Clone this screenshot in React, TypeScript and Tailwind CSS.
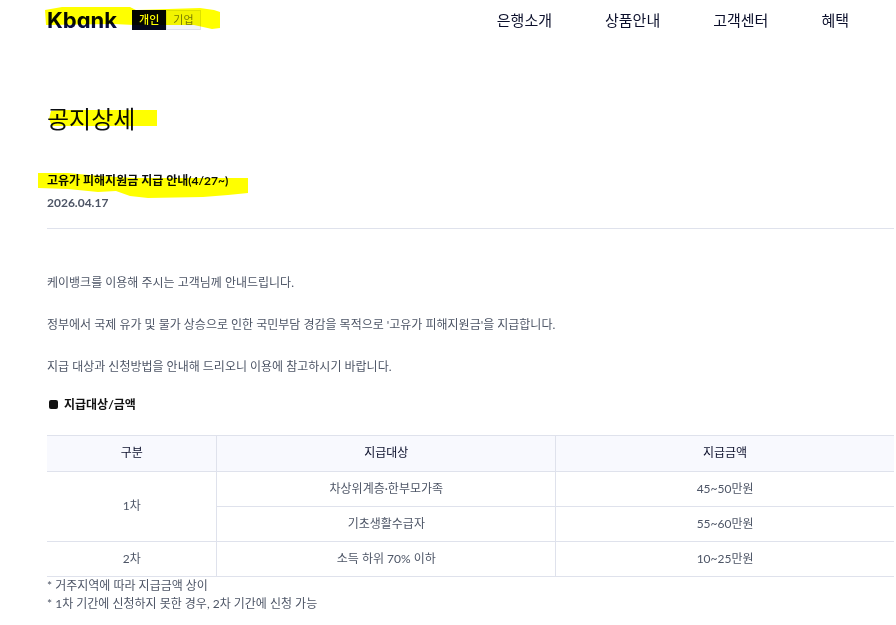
import React from "react";

const menus = ["은행소개", "상품안내", "고객센터", "혜택"];

const paragraphs = [
  "케이뱅크를 이용해 주시는 고객님께 안내드립니다.",
  "정부에서 국제 유가 및 물가 상승으로 인한 국민부담 경감을 목적으로 '고유가 피해지원금'을 지급합니다.",
  "지급 대상과 신청방법을 안내해 드리오니 이용에 참고하시기 바랍니다.",
];

// yellow marker stroke laid over the text
function Marker({ d, className, width, height }: { d: string; className: string; width: number; height: number }) {
  return (
    <svg
      className={"absolute pointer-events-none mix-blend-multiply " + className}
      width={width}
      height={height}
      viewBox={`0 0 ${width} ${height}`}
      aria-hidden="true"
    >
      <path d={d} fill="#ffff00" />
    </svg>
  );
}

function Header() {
  return (
    <header className="flex h-10 items-center justify-between pr-[47px] pl-[47px]">
      <div className="relative flex items-center gap-[15px]">
        <a
          href="#"
          className="font-['Inter',sans-serif] text-[22px] leading-6 font-bold text-[#070b3f] [font-feature-settings:'cv11']"
        >
          Kbank
        </a>
        <div className="flex text-[11px] leading-[18px]">
          <button className="border border-[#04061c] bg-[#04061c] px-[6px] font-medium text-white">개인</button>
          <button className="border border-[#dde0ea] bg-[#f3f4f6] px-[6px] text-[#777b85]">기업</button>
        </div>
        <Marker
          className="-top-px -left-[3px]"
          width={176}
          height={22}
          d="M1 3 L18 0 L86 0 L92 3 L156 1 L170 3 L176 5 V21 L168 22 L150 18 L90 18 L70 17 L2 18 Z"
        />
      </div>
      <nav className="flex gap-[53px] text-[15px] leading-5 text-[#0b0f2b]">
        {menus.map((m) => (
          <a key={m} href="#">{m}</a>
        ))}
      </nav>
    </header>
  );
}

function AmountTable() {
  const cell = "border-b border-[#dfe2ec]";
  const left = " border-l";
  return (
    <table className="mt-5 w-full table-fixed border-separate border-spacing-0 border-t border-[#dfe2ec] text-center">
      <colgroup>
        <col className="w-[20%]" />
        <col className="w-[40%]" />
        <col className="w-[40%]" />
      </colgroup>
      <thead className="bg-[#f8f9fe] text-[#0b0f2b]">
        <tr className="h-9">
          <th className={cell + " pb-0.5 font-normal"}>구분</th>
          <th className={cell + left + " pb-0.5 font-normal"}>지급대상</th>
          <th className={cell + left + " pb-0.5 font-normal"}>지급금액</th>
        </tr>
      </thead>
      <tbody>
        <tr className="h-[35px]">
          <td className={cell + " pb-0.5"} rowSpan={2}>1차</td>
          <td className={cell + left}>차상위계층·한부모가족</td>
          <td className={cell + left}>45~50만원</td>
        </tr>
        <tr className="h-[35px]">
          <td className={cell + left}>기초생활수급자</td>
          <td className={cell + left}>55~60만원</td>
        </tr>
        <tr className="h-[35px]">
          <td className={cell}>2차</td>
          <td className={cell + left}>소득 하위 70% 이하</td>
          <td className={cell + left}>10~25만원</td>
        </tr>
      </tbody>
    </table>
  );
}

export default function App() {
  return (
    <div className="bg-white font-['Lato','Noto_Sans_CJK_KR',sans-serif] text-[12px] leading-[18px] text-[#4d5566]">
      <Header />
      <main className="pt-[61px] pr-0.5 pb-3 pl-[47px]">
        <div className="relative">
          <h1 className="text-[24px] leading-9 text-[#0b0d12]">공지상세</h1>
          <Marker className="top-2 left-0.5" width={108} height={18} d="M2 2 L10 1 L108 1 V17 L3 17 L0 10 Z" />
        </div>

        <div className="relative mt-[34px] border-b border-[#dfe2ec] pb-[15px]">
          <h2 className="leading-5 font-bold text-[#0b0d12]">고유가 피해지원금 지급 안내(4/27~)</h2>
          <p className="mt-0.5 leading-5 font-bold">2026.04.17</p>
          <Marker
            className="top-0 -left-[9px]"
            width={210}
            height={28}
            d="M0 2 L30 2 L62 5 L95 7 L210 7 V22 L190 24 L165 26 L110 27 L92 25 L78 20 L60 21 L30 18 L0 17 Z"
          />
        </div>

        <section className="pt-[43px]">
          <div className="space-y-[21px] leading-[21px]">
            {paragraphs.map((p) => (
              <p key={p}>{p}</p>
            ))}
          </div>
          <h3 className="mt-[17px] flex items-center gap-[6px] leading-[21px] font-bold text-[#111111]">
            <span className="ml-0.5 size-[9px] rounded-xs bg-[#111111]" />
            지급대상/금액
          </h3>
          <AmountTable />
          <p>* 거주지역에 따라 지급금액 상이</p>
          <p>* 1차 기간에 신청하지 못한 경우, 2차 기간에 신청 가능</p>
        </section>
      </main>
    </div>
  );
}
